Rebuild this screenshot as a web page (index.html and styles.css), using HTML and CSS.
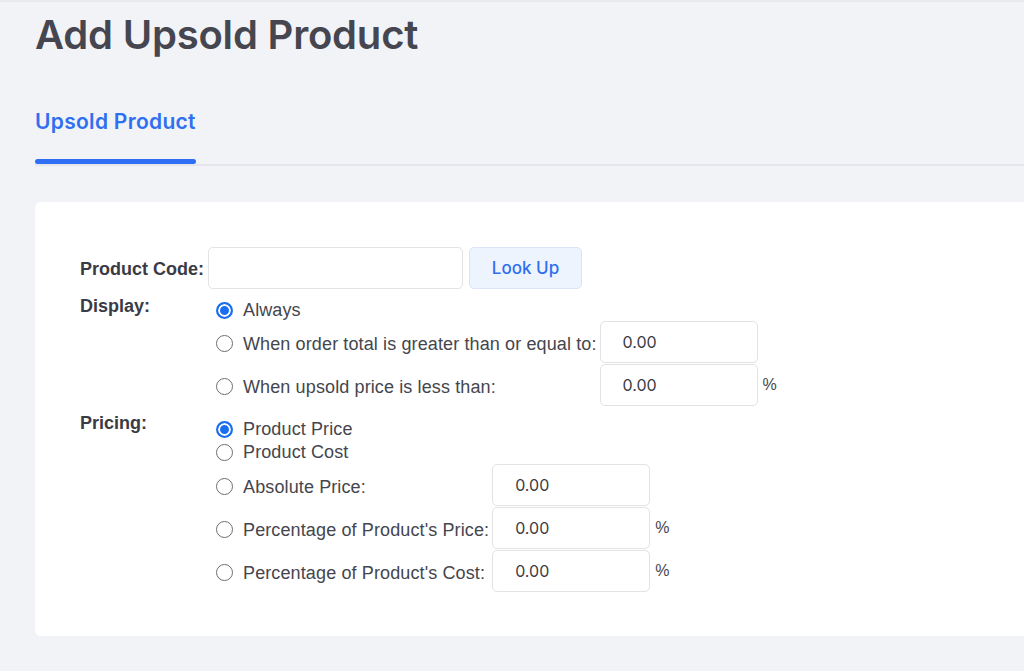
FILE: index.html
```html
<!DOCTYPE html>
<html>
<head>
<meta charset="utf-8">
<link rel="stylesheet" href="styles.css">
</head>
<body>
<div class="page">
  <h1 class="title">Add Upsold Product</h1>
  <div class="tabs">
    <div class="tab active">Upsold Product</div>
  </div>
  <div class="card">
    <div class="field code-field">
      <div class="label">Product Code:</div>
      <div class="code-controls">
        <input class="text code-input" type="text">
        <button class="btn-lookup" type="button">Look Up</button>
      </div>
    </div>
    <div class="field section display-section">
      <div class="label">Display:</div>
      <div class="options display-options">
        <label class="opt"><input type="radio" name="display" checked><span>Always</span></label>
        <div></div><div></div>
        <label class="opt low"><input type="radio" name="display"><span>When order total is greater than or equal to:</span></label>
        <div class="cell"><input class="text num" type="text" value="0.00"></div><div></div>
        <label class="opt low"><input type="radio" name="display"><span>When upsold price is less than:</span></label>
        <div class="cell"><input class="text num" type="text" value="0.00"></div><div class="pct">%</div>
      </div>
    </div>
    <div class="field section pricing-section">
      <div class="label">Pricing:</div>
      <div class="options pricing-options">
        <label class="opt"><input type="radio" name="pricing" checked><span>Product Price</span></label>
        <div></div><div></div>
        <label class="opt"><input type="radio" name="pricing"><span>Product Cost</span></label>
        <div></div><div></div>
        <label class="opt low"><input type="radio" name="pricing"><span>Absolute Price:</span></label>
        <div class="cell"><input class="text num" type="text" value="0.00"></div><div></div>
        <label class="opt low"><input type="radio" name="pricing"><span>Percentage of Product's Price:</span></label>
        <div class="cell"><input class="text num" type="text" value="0.00"></div><div class="pct">%</div>
        <label class="opt low"><input type="radio" name="pricing"><span>Percentage of Product's Cost:</span></label>
        <div class="cell"><input class="text num" type="text" value="0.00"></div><div class="pct">%</div>
      </div>
    </div>
  </div>
</div>
</body>
</html>
```

FILE: styles.css
```css
html, body {
  margin: 0;
  padding: 0;
}
body {
  background: #f2f3f7;
  overflow: hidden;
  height: 671px;
  border-top: 2px solid #e8eaee;
  box-sizing: border-box;
}
.page {
  padding: 0 0 0 35px;
}
.title {
  margin: 0;
  padding-top: 5px;
  font-family: Inter, "Liberation Sans", sans-serif;
  font-weight: 600;
  font-size: 40px;
  line-height: 56px;
  color: #45464f;
  letter-spacing: -0.2px;
}
.tabs {
  display: flex;
  border-bottom: 2px solid #e3e6eb;
}
.tab {
  position: relative;
  padding-top: 47px;
  padding-bottom: 30px;
  font-family: Inter, "Liberation Sans", sans-serif;
  font-weight: 600;
  font-size: 21px;
  line-height: 24px;
  letter-spacing: 0.3px;
  color: #2f6ff0;
}
.tab.active::after {
  content: "";
  position: absolute;
  left: 0;
  right: 0;
  bottom: 0;
  height: 5px;
  border-radius: 3px;
  background: #2f6ff5;
}
.card {
  margin-top: 36px;
  margin-right: -20px;
  background: #fff;
  border-radius: 6px;
  padding: 45px 0 43px 45px;
}
.field {
  display: grid;
  grid-template-columns: 128px auto;
  justify-content: start;
}
.label {
  font-family: "Liberation Sans", Arial, sans-serif;
  font-weight: 700;
  font-size: 18px;
  line-height: 20px;
  color: #3a3b45;
}
.code-field {
  align-items: center;
}
.code-field .label {
  padding-top: 2px;
}
.code-controls {
  display: flex;
  gap: 6px;
}
.text {
  box-sizing: border-box;
  height: 42px;
  border: 1px solid #e3e3e6;
  border-radius: 5px;
  background: #fff;
  outline: none;
  margin: 0;
}
.code-input {
  width: 255px;
}
.btn-lookup {
  box-sizing: border-box;
  width: 113px;
  height: 42px;
  border: 1px solid #d9e4f6;
  border-radius: 5px;
  background: #eef4fd;
  color: #2f6ff0;
  font-family: Inter, "Liberation Sans", sans-serif;
  font-weight: 500;
  font-size: 17px;
  padding: 0;
}
.section {
  margin-top: 7px;
}
.pricing-section {
  margin-top: 6px;
}
.options {
  display: grid;
  grid-template-columns: auto 158px auto;
  justify-content: start;
  padding-top: 4px;
}
.display-options {
  grid-template-rows: 21px 43px 43px;
}
.pricing-options {
  padding-top: 5px;
  grid-template-rows: 23px 23px 43px 43px 43px;
}
.opt {
  display: flex;
  align-items: center;
  gap: 10px;
  font-family: "Liberation Sans", Arial, sans-serif;
  font-size: 18px;
  letter-spacing: 0.12px;
  color: #45464d;
  white-space: nowrap;
  padding-right: 3px;
}
.opt.low span {
  padding-top: 3px;
}
.opt input[type="radio"] {
  appearance: none;
  -webkit-appearance: none;
  box-sizing: border-box;
  width: 17px;
  height: 17px;
  margin: 0 0 0 8px;
  border: 1px solid #6e6e70;
  border-radius: 50%;
  background: #fff;
  flex: none;
}
.opt.low input[type="radio"] {
  margin-top: 1px;
}
.opt input[type="radio"]:checked {
  border: 2px solid #1a6ff0;
  background: #1a6ff0;
  box-shadow: inset 0 0 0 2px #fff;
}
.cell {
  display: flex;
  align-items: flex-start;
}
.num {
  width: 158px;
  padding: 0 0 0 22px;
  font-family: Inter, "Liberation Sans", sans-serif;
  font-size: 16px;
  color: #3a3b45;
}
.pct {
  display: flex;
  align-items: center;
  padding-left: 5px;
  padding-bottom: 1px;
  font-family: "Liberation Sans", Arial, sans-serif;
  font-size: 16px;
  color: #45464d;
}
```
